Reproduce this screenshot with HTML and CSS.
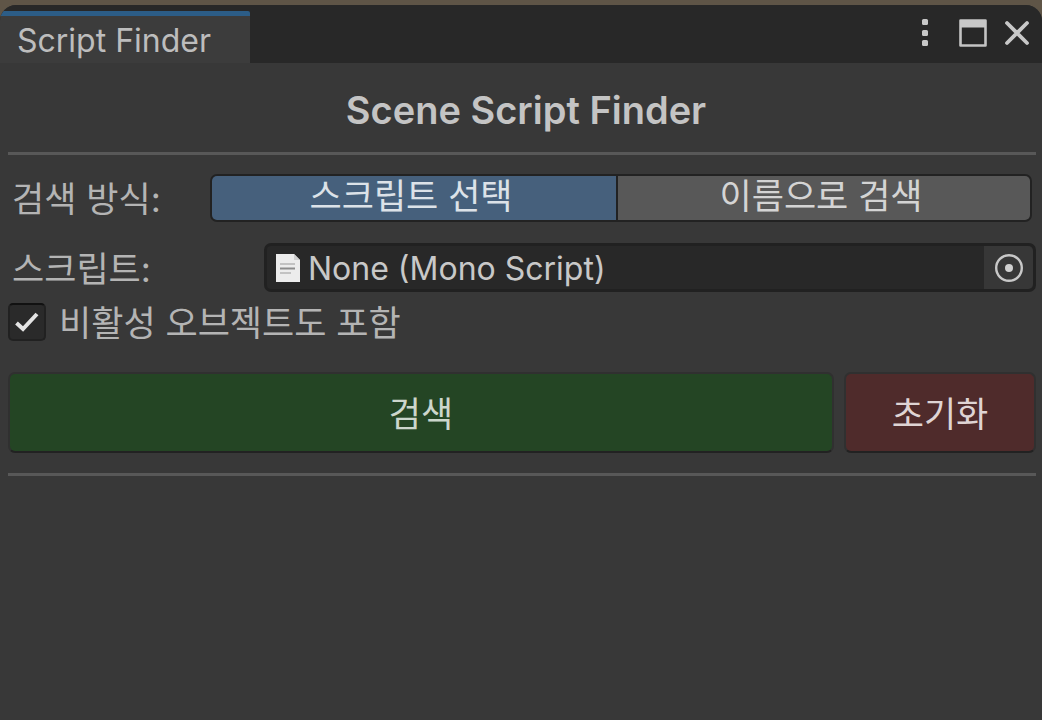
FILE: index.html
```html
<!DOCTYPE html>
<html lang="ko">
<head>
<meta charset="utf-8">
<title>Script Finder</title>
<link rel="stylesheet" href="styles.css">
</head>
<body>
<div class="window">
  <header class="tabbar">
    <button class="tab" type="button">Script Finder</button>
    <div class="window-controls">
      <button class="icon-button" type="button" aria-label="Menu">
        <svg width="8" height="30" viewBox="0 0 8 30"><g fill="#c8c8c8"><rect x="1" y="1" width="6" height="6" rx="1.500"/><rect x="1" y="12" width="6" height="6" rx="1.500"/><rect x="1" y="22" width="6" height="6" rx="1.500"/></g></svg>
      </button>
      <button class="icon-button" type="button" aria-label="Maximize">
        <svg width="28" height="28" viewBox="0 0 28 28"><path d="M1.500 1.500h25v25h-25z" fill="none" stroke="#c4c4c4" stroke-width="2.600" stroke-linejoin="round"/><path d="M1 1h26v7.500H1z" fill="#c8c8c8"/></svg>
      </button>
      <button class="icon-button" type="button" aria-label="Close">
        <svg width="26" height="26" viewBox="0 0 26 26"><path d="M3 3l20 20M23 3L3 23" fill="none" stroke="#c8c8c8" stroke-width="3.800" stroke-linecap="round"/></svg>
      </button>
    </div>
  </header>
  <main class="content">
    <h1 class="title">Scene Script Finder</h1>
    <hr class="rule">
    <div class="row mode-row">
      <span class="label" id="mode-label">검색 방식:</span>
      <div class="segments" role="group" aria-labelledby="mode-label">
        <button class="segment segment-active" type="button" aria-pressed="true">스크립트 선택</button>
        <button class="segment" type="button" aria-pressed="false">이름으로 검색</button>
      </div>
    </div>
    <div class="row script-row">
      <label class="label label-wide" for="script">스크립트:</label>
      <div class="object-field">
        <svg class="file-icon" width="26" height="30" viewBox="0 0 26 30"><path d="M1 1h18l6 6v22H1z" fill="#ececec"/><path d="M19 1l6 6h-6z" fill="#d0d0d0"/><path d="M5 11h15M5 20h11" stroke="#c2c2c2" stroke-width="2"/><path d="M5 15.500h15" stroke="#8c8c8c" stroke-width="2"/></svg>
        <input class="object-input" id="script" type="text" value="None (Mono Script)" readonly>
        <button class="picker" type="button" aria-label="Select script">
          <svg width="30" height="30" viewBox="0 0 30 30"><circle cx="15" cy="15" r="12.800" fill="none" stroke="#c8c8c8" stroke-width="2.400"/><circle cx="15" cy="15" r="4" fill="#d0d0d0"/></svg>
        </button>
      </div>
    </div>
    <label class="toggle">
      <span class="checkbox">
        <input class="checkbox-input" type="checkbox" checked>
        <svg class="checkmark" width="26" height="22" viewBox="0 0 26 22"><path d="M2.500 12l6.500 6L23 3" fill="none" stroke="#e4e4e4" stroke-width="4"/></svg>
      </span>
      <span class="toggle-text">비활성 오브젝트도 포함</span>
    </label>
    <div class="actions">
      <button class="action action-search" type="button">검색</button>
      <button class="action action-reset" type="button">초기화</button>
    </div>
    <hr class="rule">
  </main>
</div>
</body>
</html>
```
FILE: styles.css
```css
* {
  box-sizing: border-box;
}

body {
  margin: 0;
  min-height: 100vh;
  padding-top: 5px;
  display: flex;
  background: #5f5547;
  color: #b4b4b4;
  font-family: "Inter", "Noto Sans CJK KR", sans-serif;
  font-size: 35px;
  line-height: 40px;
}

button,
input {
  margin: 0;
  padding: 0;
  border: 0;
  background: none;
  color: inherit;
  font: inherit;
}

svg {
  display: block;
}

.window {
  flex: 1;
  min-width: 0;
  overflow: hidden;
  border-radius: 16px 16px 0 0;
  background: #383838;
}

.tabbar {
  display: flex;
  justify-content: space-between;
  padding-top: 6px;
  background: #282828;
}

.tab {
  width: 250px;
  height: 52px;
  padding: 2px 0 0 17px;
  border-top: 5px solid #2c5d87;
  border-radius: 4px 2px 0 0;
  background: #3c3c3c;
  color: #bdbdbd;
  font-size: 32px;
  text-align: left;
}

.window-controls {
  display: flex;
  align-items: center;
  gap: 17px;
  padding: 0 12px 8px 0;
}

.icon-button:first-child {
  margin-right: 13px;
}

.content {
  padding: 24px 6px 0 8px;
}

.title {
  margin: 0 0 19px;
  padding-left: 8px;
  color: #c4c4c4;
  font-size: 38px;
  font-weight: 600;
  line-height: 46px;
  text-align: center;
}

.rule {
  height: 3px;
  margin: 0;
  border: 0;
  background: #585858;
}

.row {
  display: flex;
  align-items: center;
}

.label {
  flex: none;
  width: 202px;
  padding: 2px 0 0 4px;
}

.label-wide {
  width: 256px;
}

.mode-row {
  margin-top: 19px;
  padding-right: 4px;
}

.script-row {
  margin-top: 21px;
}

.segments {
  flex: 1;
  display: flex;
  gap: 2px;
  padding: 2px;
  border-radius: 7px;
  background: #222222;
}

.segment {
  flex: 206;
  height: 44px;
  padding: 0 6px 4px 0;
  border-radius: 0 5px 5px 0;
  background: #585858;
  color: #d4d4d4;
}

.segment-active {
  flex: 202;
  border-radius: 5px 0 0 5px;
  background: #46607c;
  color: #dce2e8;
}

.object-field {
  flex: 1;
  display: flex;
  align-items: center;
  height: 49px;
  padding-left: 8px;
  border: 3px solid #212121;
  border-radius: 7px;
  background: #282828;
}

.object-input {
  flex: 1;
  min-width: 0;
  padding: 2px 0 0 7px;
  outline: 0;
  color: #c8c8c8;
  font-size: 32px;
}

.picker {
  display: grid;
  place-items: center;
  width: 49px;
  height: 43px;
  border-radius: 0 5px 5px 0;
  background: #373737;
}

.toggle {
  display: flex;
  align-items: center;
  gap: 13px;
  margin-top: 9px;
}

.toggle-text {
  padding-top: 2px;
}

.checkbox {
  display: grid;
  place-items: center;
}

.checkbox-input,
.checkmark {
  grid-area: 1 / 1;
}

.checkbox-input {
  appearance: none;
  width: 38px;
  height: 38px;
  border: 2px solid #212121;
  border-top-color: #111111;
  border-radius: 5px;
  background: #2a2a2a;
}

.checkmark {
  pointer-events: none;
  visibility: hidden;
}

.checkbox-input:checked + .checkmark {
  visibility: visible;
}

.actions {
  display: flex;
  gap: 10px;
  margin: 29px 0 20px;
}

.action {
  height: 81px;
  padding-top: 2px;
  border: 2px solid #303030;
  border-bottom-color: #222222;
  border-radius: 7px;
}

.action-search {
  flex: 1;
  background: #244524;
  color: #ccd6cc;
}

.action-reset {
  width: 192px;
  background: #4f2b2b;
  color: #dfd4d4;
}
```
